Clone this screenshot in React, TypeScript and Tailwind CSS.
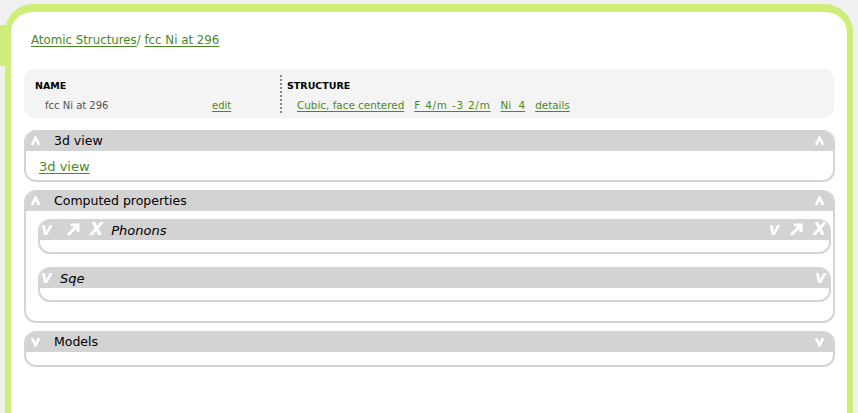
import React from "react";

const green = "text-[#4a8a22] underline underline-offset-2";

const Caret = ({ dir }: { dir: "up" | "down" }) => (
  <svg width="9" height="10" viewBox="0 0 9 10" className="block">
    <path
      d={dir === "up" ? "M1 9 L4.5 1.5 L8 9" : "M1 1 L4.5 8.5 L8 1"}
      stroke="white"
      strokeWidth="2.6"
      fill="none"
    />
  </svg>
);

const Tools = ({ left }: { left: boolean }) => (
  <div className="flex items-center text-white font-bold italic text-[17px] leading-none">
    <span>v</span>
    <svg width="15" height="14" viewBox="0 0 15 14" className={left ? "ml-[14px]" : "ml-[9px]"}>
      <path d="M2 12 L12 2 M5 2 H12 V9" stroke="white" strokeWidth="3" fill="none" />
    </svg>
    <span className="ml-[9px]">X</span>
  </div>
);

const Panel = ({
  title,
  open,
  children,
  bodyClass,
}: {
  title: string;
  open: boolean;
  children?: React.ReactNode;
  bodyClass?: string;
}) => (
  <div className="border-2 border-t-0 border-[#d4d4d4] rounded-[12px] overflow-hidden bg-white">
    <div className="bg-[#d3d3d3] h-[21px] flex items-center justify-between pl-[5px] pr-[9px]">
      <div className="flex items-center gap-[14px]">
        <Caret dir={open ? "up" : "down"} />
        <span className="text-[12.5px] text-black translate-y-[1px]">{title}</span>
      </div>
      <Caret dir={open ? "up" : "down"} />
    </div>
    <div className={bodyClass}>{children}</div>
  </div>
);

const SubPanel = ({ title, tools }: { title: string; tools: boolean }) => (
  <div className="border-2 border-t-0 border-[#d4d4d4] rounded-[12px] overflow-hidden bg-white">
    <div className="bg-[#d3d3d3] h-[21px] flex items-center justify-between pl-[1px] pr-[3px]">
      <div className="flex items-center gap-[8px]">
        {tools ? (
          <Tools left />
        ) : (
          <span className="text-white font-bold italic text-[17px] leading-none">v</span>
        )}
        <span className="italic text-[13px] text-black translate-y-[1px]">{title}</span>
      </div>
      {tools ? (
        <Tools left={false} />
      ) : (
        <span className="text-white font-bold italic text-[17px] leading-none">v</span>
      )}
    </div>
    <div className="h-[12px]" />
  </div>
);

export default function App() {
  return (
    <div
      className="relative h-[413px] w-[858px] bg-[#f0f0f0] pt-[4px] px-[5px] overflow-hidden"
      style={{ fontFamily: '"DejaVu Sans", "Liberation Sans", sans-serif' }}
    >
      <div className="absolute left-0 top-[25px] w-[6px] h-[41px] bg-[#cdef79]" />
      <div className="h-full bg-white border-[#cdef79] border-t-8 border-x-[6px] rounded-t-[28px] px-[13px]">
        <div className="pt-[20px] pl-[7px] text-[11.8px] h-[57px]">
          <a className={green}>Atomic Structures</a>
          <span className="text-[#4a8a22]">/ </span>
          <a className={green}>fcc Ni at 296</a>
        </div>
        <div className="bg-[#f4f4f4] rounded-[10px] h-[49px] flex px-[11px] pt-[6px]">
          <div className="w-[245px] pt-[4px]">
            <div className="text-[9.5px] font-bold text-black">NAME</div>
            <div className="flex text-[10px] mt-[5px]">
              <span className="pl-[10px] w-[177px] text-[#555]">fcc Ni at 296</span>
              <a className={green}>edit</a>
            </div>
          </div>
          <div className="border-l-2 border-dotted border-[#888] h-[38px] pl-[5px] pt-[4px]">
            <div className="text-[9.5px] font-bold text-black">STRUCTURE</div>
            <div className="flex gap-[10px] text-[10.4px] mt-[5px] pl-[10px]">
              <a className={green}>Cubic, face centered</a>
              <a className={`${green} tracking-[0.8px]`}>F 4/m -3 2/m</a>
              <a className={`${green} [word-spacing:4px]`}>Ni 4</a>
              <a className={green}>details</a>
            </div>
          </div>
        </div>
        <div className="flex flex-col gap-[8px] mt-[12px] w-[811px]">
          <Panel title="3d view" open bodyClass="h-[29px] pl-[13px] pt-[3px]">
            <a className={`${green} text-[13px]`}>3d view</a>
          </Panel>
          <Panel title="Computed properties" open bodyClass="pl-[12px] pr-[2px] pt-[8px] pb-[19px] flex flex-col gap-[13px]">
            <SubPanel title="Phonons" tools />
            <SubPanel title="Sqe" tools={false} />
          </Panel>
          <Panel title="Models" open={false} bodyClass="h-[13px]" />
        </div>
      </div>
    </div>
  );
}
